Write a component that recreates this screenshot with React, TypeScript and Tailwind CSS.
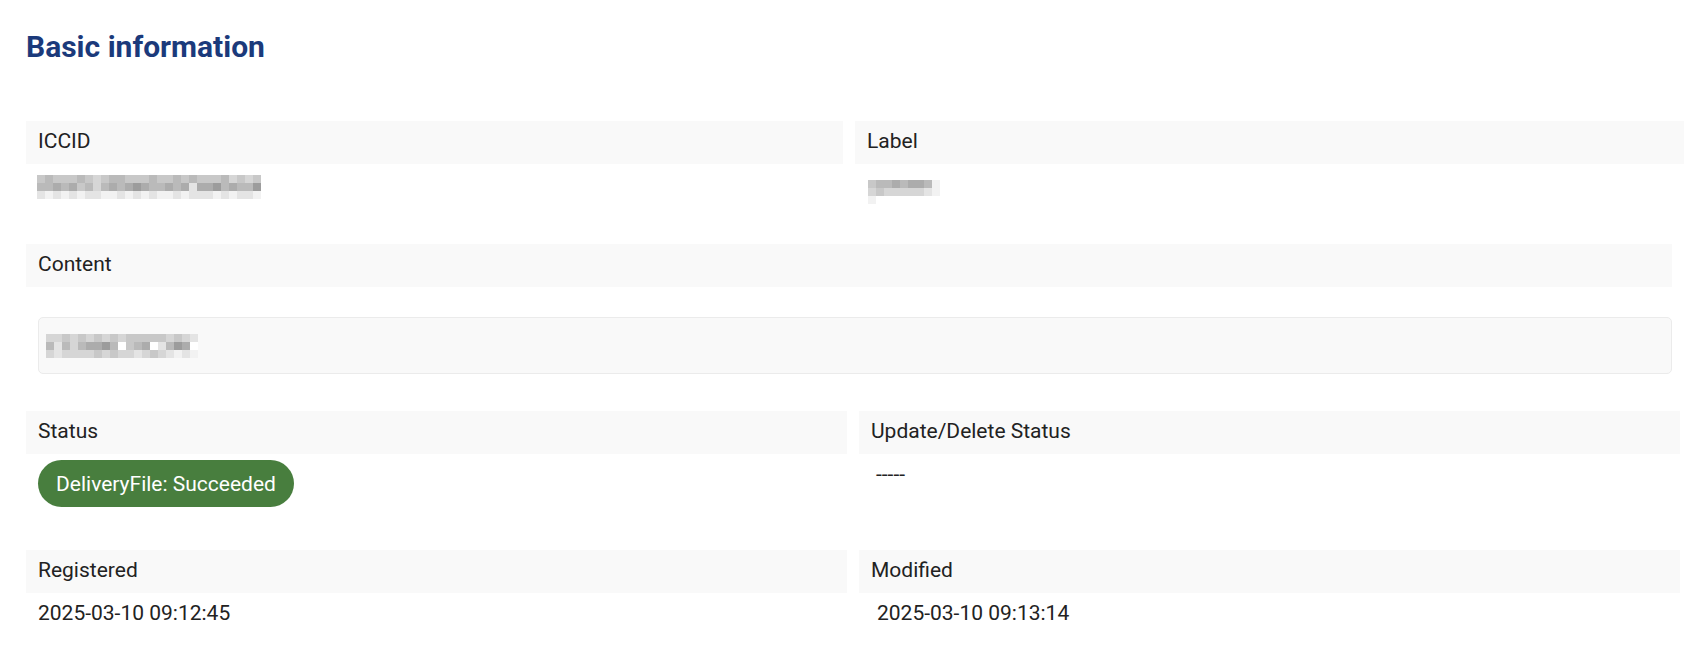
import React from "react";

const SHADES = [
  "bg-[#ffffff]",
  "bg-[#f2f2f2]",
  "bg-[#e4e4e4]",
  "bg-[#d6d6d6]",
  "bg-[#c8c8c8]",
  "bg-[#bababa]",
  "bg-[#acacac]",
  "bg-[#9c9c9c]",
  "bg-[#8c8c8c]",
];

function Mosaic({ rows }: { rows: string[] }) {
  return (
    <div className="flex flex-col">
      {rows.map((r, i) => (
        <div key={i} className="flex">
          {r.split("").map((c, j) => (
            <div key={j} className={`w-[8px] h-[8px] ${SHADES[Number(c)]}`} />
          ))}
        </div>
      ))}
    </div>
  );
}

function Band({ children }: { children: React.ReactNode }) {
  return (
    <div className="h-[43px] bg-[#f9f9f9] px-[12px] pb-[3px] flex items-center text-[21px] leading-[28px] text-[#222222]">
      {children}
    </div>
  );
}

export default function App() {
  return (
    <div className="w-[1700px] h-[664px] bg-white font-['Roboto',sans-serif] pl-[26px] pt-[29px] overflow-hidden">
      <h1 className="text-[30px] leading-[36px] font-bold text-[#1b3a7b]">Basic information</h1>

      {/* Row 1 */}
      <div className="mt-[56px] grid grid-cols-[817px_829px] gap-x-[12px] h-[123px]">
        <div>
          <Band>ICCID</Band>
          <div className="pt-[11px] pl-[11px]">
            <Mosaic
              rows={[
                "4544454345544454454544453434",
                "5565645356567655656266756557",
                "2121212211212121121222121221",
              ]}
            />
          </div>
        </div>
        <div>
          <Band>Label</Band>
          <div className="pt-[16px] pl-[13px]">
            <Mosaic rows={["455656651", "343333321", "100000000"]} />
          </div>
        </div>
      </div>

      {/* Row 2 */}
      <div className="w-[1646px] h-[167px]">
        <Band>Content</Band>
        <div className="mt-[30px] ml-[12px] h-[57px] rounded-[5px] border border-[#ebebeb] bg-[#f9f9f9] flex items-center pl-[7px]">
          <Mosaic
            rows={[
              "3343434343444443432",
              "5253566750456025760",
              "3233334343323432121",
            ]}
          />
        </div>
      </div>

      {/* Row 3 */}
      <div className="grid grid-cols-[821px_821px] gap-x-[12px] h-[139px]">
        <div>
          <Band>Status</Band>
          <div className="mt-[6px] ml-[12px]">
            <span className="inline-flex items-center h-[47px] px-[18px] rounded-full bg-[#487e3e] text-white text-[21px] leading-[28px]">
              DeliveryFile: Succeeded
            </span>
          </div>
        </div>
        <div>
          <Band>Update/Delete Status</Band>
          <div className="mt-[6px] pl-[17px] text-[21px] leading-[28px] text-[#222222]">-----</div>
        </div>
      </div>

      {/* Row 4 */}
      <div className="grid grid-cols-[821px_821px] gap-x-[12px]">
        <div>
          <Band>Registered</Band>
          <div className="mt-[6px] pl-[12px] text-[21px] leading-[28px] text-[#222222]">2025-03-10 09:12:45</div>
        </div>
        <div>
          <Band>Modified</Band>
          <div className="mt-[6px] pl-[18px] text-[21px] leading-[28px] text-[#222222]">2025-03-10 09:13:14</div>
        </div>
      </div>
    </div>
  );
}
